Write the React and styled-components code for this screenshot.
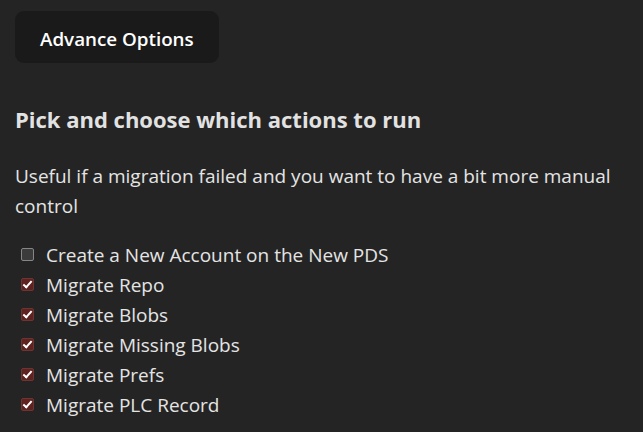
import React from "react";
import styled, { createGlobalStyle } from "styled-components";

const GlobalStyle = createGlobalStyle`
  html, body { margin: 0; padding: 0; }
  body {
    background: #242424;
    color: rgba(255, 255, 255, 0.87);
    font-family: "Open Sans", "Noto Sans", sans-serif;
    font-size: 19px;
    line-height: 30px;
  }
`;

const Page = styled.main`
  display: flex;
  flex-direction: column;
  align-items: flex-start;
  padding: 11px 15px 0 15px;
`;

const OptionsButton = styled.button`
  font-family: inherit;
  font-size: 18.8px;
  font-weight: 600;
  line-height: 30px;
  color: #ffffff;
  background: #1a1a1a;
  border: 1px solid transparent;
  border-radius: 9px;
  padding: 12px 24px 8px 24px;
  cursor: pointer;
`;

const Heading = styled.h3`
  margin: 41px 0 0 0;
  font-size: 22px;
  font-weight: 700;
  line-height: 30px;
  color: #e2e2e2;
`;

const Description = styled.p`
  margin: 27px 0 0 0;
  color: #e4e4e4;
`;

const ActionList = styled.div`
  display: flex;
  flex-direction: column;
  margin-top: 19px;
`;

const ActionRow = styled.label`
  display: flex;
  align-items: center;
  gap: 12px;
  height: 30px;
  padding-left: 6px;
  color: #e4e4e4;
  cursor: pointer;
`;

const Box = styled.input.attrs({ type: "checkbox" })`
  appearance: none;
  -webkit-appearance: none;
  margin: -2px 0 0 0;
  width: 13px;
  height: 13px;
  box-sizing: border-box;
  border-radius: 2px;
  border: 1px solid ${(p) => (p.checked ? "#6e3431" : "#868686")};
  background: ${(p) => (p.checked ? "#5e2320" : "#3b3b3b")};
  display: grid;
  place-items: center;
  flex: none;

  &:checked::after {
    content: "";
    width: 7px;
    height: 3px;
    border-left: 2.5px solid #fff;
    border-bottom: 2.5px solid #fff;
    transform: translate(0, -1px) rotate(-48deg);
  }
`;

const actions = [
  { label: "Create a New Account on the New PDS", checked: false },
  { label: "Migrate Repo", checked: true },
  { label: "Migrate Blobs", checked: true },
  { label: "Migrate Missing Blobs", checked: true },
  { label: "Migrate Prefs", checked: true },
  { label: "Migrate PLC Record", checked: true },
];

export default function App() {
  const [state, setState] = React.useState(actions.map((a) => a.checked));
  return (
    <>
      <GlobalStyle />
      <Page>
        <OptionsButton>Advance Options</OptionsButton>
        <Heading>Pick and choose which actions to run</Heading>
        <Description>
          Useful if a migration failed and you want to have a bit more manual
          control
        </Description>
        <ActionList>
          {actions.map((a, i) => (
            <ActionRow key={a.label}>
              <Box
                checked={state[i]}
                onChange={() =>
                  setState((s) => s.map((v, j) => (j === i ? !v : v)))
                }
              />
              {a.label}
            </ActionRow>
          ))}
        </ActionList>
      </Page>
    </>
  );
}
